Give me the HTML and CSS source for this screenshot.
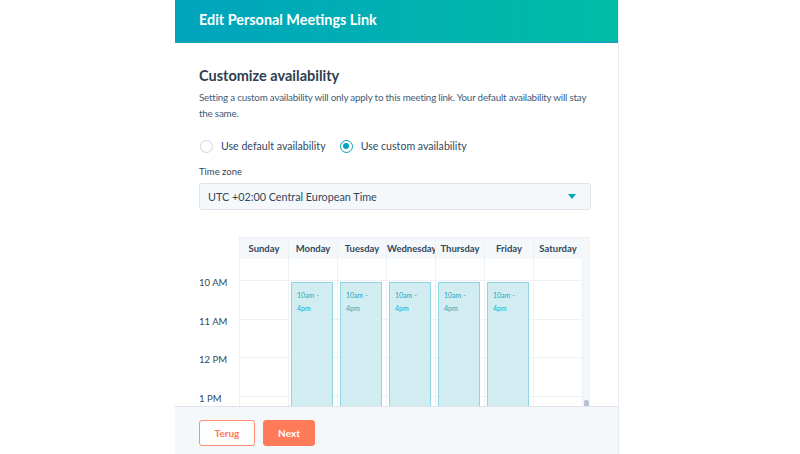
FILE: index.html
```html
<!DOCTYPE html>
<html>
<head>
<meta charset="utf-8">
<link rel="stylesheet" href="styles.css">
</head>
<body>
<div class="panel">
  <div class="header">Edit Personal Meetings Link</div>
  <div class="content">
    <h2 class="title">Customize availability</h2>
    <p class="desc">Setting a custom availability will only apply to this meeting link. Your default availability will stay the same.</p>
    <div class="radios">
      <label class="radio"><span class="dot"></span>Use default availability</label>
      <label class="radio on"><span class="dot"></span>Use custom availability</label>
    </div>
    <div class="label">Time zone</div>
    <div class="select"><span>UTC +02:00 Central European Time</span><span class="caret"></span></div>
    <div class="cal">
      <div class="cal-head">
        <div class="gutter"></div>
        <div class="dh">Sunday</div>
        <div class="dh">Monday</div>
        <div class="dh">Tuesday</div>
        <div class="dh">Wednesday</div>
        <div class="dh">Thursday</div>
        <div class="dh">Friday</div>
        <div class="dh">Saturday</div>
        <div class="dh sb"></div>
      </div>
      <div class="cal-body">
        <div class="times">
          <div class="t">10 AM</div>
          <div class="t">11 AM</div>
          <div class="t">12 PM</div>
          <div class="t">1 PM</div>
        </div>
        <div class="days">
          <div class="day"><div class="s first"></div><div class="s"></div><div class="s"></div><div class="s"></div><div class="s"></div></div>
          <div class="day"><div class="s first"></div><div class="s"></div><div class="s"></div><div class="s"></div><div class="s"></div><div class="ev">10am -<br>4pm</div></div>
          <div class="day"><div class="s first"></div><div class="s"></div><div class="s"></div><div class="s"></div><div class="s"></div><div class="ev">10am -<br>4pm</div></div>
          <div class="day"><div class="s first"></div><div class="s"></div><div class="s"></div><div class="s"></div><div class="s"></div><div class="ev">10am -<br>4pm</div></div>
          <div class="day"><div class="s first"></div><div class="s"></div><div class="s"></div><div class="s"></div><div class="s"></div><div class="ev">10am -<br>4pm</div></div>
          <div class="day"><div class="s first"></div><div class="s"></div><div class="s"></div><div class="s"></div><div class="s"></div><div class="ev">10am -<br>4pm</div></div>
          <div class="day"><div class="s first"></div><div class="s"></div><div class="s"></div><div class="s"></div><div class="s"></div></div>
        </div>
        <div class="scroll"><div class="thumb"></div></div>
      </div>
    </div>
  </div>
  <div class="footer">
    <button class="btn ghost">Terug</button>
    <button class="btn primary">Next</button>
  </div>
</div>
</body>
</html>
```

FILE: styles.css
```css
* { box-sizing: border-box; }
html, body { margin: 0; padding: 0; background: #fff; }
body { width: 800px; height: 454px; overflow: hidden; font-family: Lato, "Open Sans", sans-serif; color: #33475b; }

.panel {
  margin-left: 175px;
  width: 444px;
  height: 454px;
  border-right: 1px solid #e5ebf1;
  display: flex;
  flex-direction: column;
}
.header {
  height: 43px;
  flex: none;
  background: linear-gradient(90deg, #00a4bd 0%, #00bda5 100%);
  border-bottom: 2px solid #14a6b6;
  color: #fff;
  font-weight: 700;
  font-size: 14.4px;
  padding: 11px 0 0 24px;
}
.content {
  flex: 1;
  overflow: hidden;
  padding: 23px 27px 0 24px;
}
.title { margin: 0; font-size: 14.5px; font-weight: 700; line-height: 20px; color: #2d3e50; }
.desc { margin: 3px -6px 0 0; font-size: 9.8px; line-height: 16px; color: #425b76; letter-spacing: -0.2px; }
.radios { display: flex; gap: 13px; margin-top: 17px; height: 16px; align-items: center; }
.radio { display: flex; align-items: center; font-size: 10.6px; color: #33475b; gap: 8px; }
.dot { width: 13px; height: 13px; border-radius: 50%; border: 1px solid #cbd6e2; background: #fff; position: relative; margin-left: 1px; }
.radio.on .dot { border: 1.5px solid #00a4bd; }
.radio.on .dot::after { content: ""; position: absolute; left: 2px; top: 2px; width: 6px; height: 6px; border-radius: 50%; background: #00a4bd; }
.label { margin-top: 11px; font-size: 9.5px; line-height: 14px; color: #33475b; }
.select {
  margin-top: 4px;
  height: 27px;
  border: 1px solid #dfe3eb;
  border-radius: 3px;
  background: #f5f8fa;
  display: flex; align-items: center; justify-content: space-between;
  padding: 0 14px 0 8px;
  font-size: 10.8px; color: #33475b;
}
.caret { width: 0; height: 0; border-left: 4px solid transparent; border-right: 4px solid transparent; border-top: 5px solid #00a4bd; }

.cal { margin-top: 27px; width: 391px; }
.cal-head { display: flex; height: 22px; }
.gutter { width: 40px; }
.dh {
  width: 49px; background: #f5f8fa; border-left: 1px solid #eaf0f6; border-top: 1px solid #eaf0f6;
  font-size: 9.5px; font-weight: 700; color: #33475b; text-align: center; line-height: 21px; white-space: nowrap;
}
.dh.sb { width: 8px; border-left: none; }
.cal-body { display: flex; height: 200px; }
.times { width: 40px; padding-top: 18px; }
.t { height: 38.5px; font-size: 9.5px; line-height: 12px; color: #33475b; }
.days { display: flex; }
.day { width: 49px; border-left: 1px solid #eef2f7; position: relative; }
.s { height: 38.5px; border-bottom: 1px solid #eef2f7; }
.s.first { height: 22px; }
.ev {
  position: absolute; left: 2px; right: 4px; top: 23px; height: 200px;
  background: #d2edf2; border: 1px solid #8ed6e1;
  color: #22a9bd; font-size: 7px; line-height: 13px; padding: 6px 0 0 5px;
}
.scroll { width: 8px; height: 147px; background: #f5f8fa; border-left: 1px solid #eaf0f6; position: relative; }
.thumb { position: absolute; left: 1px; bottom: 0; width: 5px; height: 6px; background: #b7c2cf; border-radius: 2px 2px 0 0; }

.footer {
  height: 48px; flex: none;
  background: #f5f8fa; border-top: 1px solid #dfe3eb;
  display: flex; gap: 8px; padding: 13px 0 0 24px;
}
.btn { height: 26px; border-radius: 3px; font-family: Lato, "Open Sans", sans-serif; font-size: 10px; font-weight: 700; padding: 0; }
.ghost { width: 56px; background: #fff; border: 1px solid #ff8f73; color: #ff7a59; }
.primary { width: 52px; background: #ff7a59; border: 1px solid #ff7a59; color: #fff; }
```
